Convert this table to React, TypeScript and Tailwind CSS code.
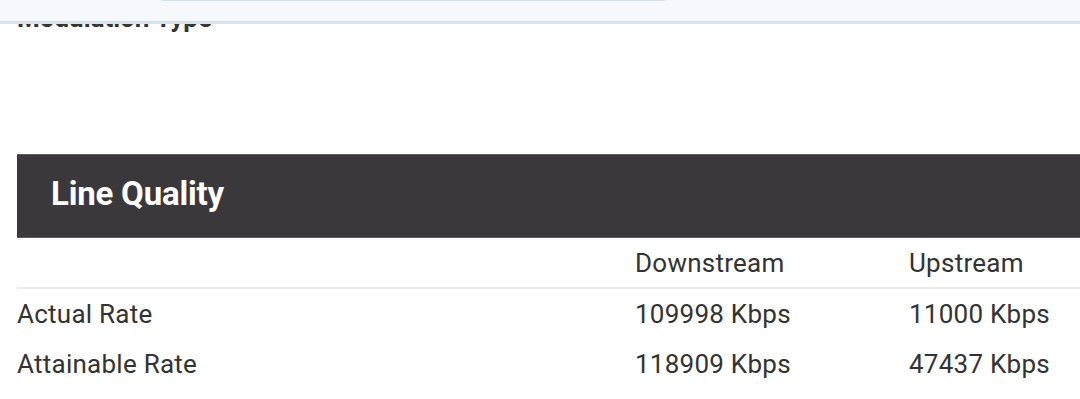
import React from 'react';

type RateRow = { label: string; down: string; up: string };

const rows: RateRow[] = [
  { label: 'Actual Rate', down: '109998 Kbps', up: '11000 Kbps' },
  { label: 'Attainable Rate', down: '118909 Kbps', up: '47437 Kbps' },
];

export default function App() {
  return (
    <div className="relative h-[399px] w-full overflow-hidden bg-white font-['Roboto',sans-serif] text-[#333333]">
      <div className="absolute inset-x-0 top-0 z-10 h-[24px] overflow-hidden border-b-[3px] border-[#d9e1ea] bg-[#f5f8fd]">
        <div className="ml-[158px] mt-[-39px] h-[40px] w-[511px] rounded-[6px] border border-[#cfe2f3] bg-[#f7faff]" />
      </div>

      <div className="pl-[17px]">
        <div className="pt-[2px] text-[26px] font-bold leading-[32px]">Modulation Type</div>

        {/* Line Quality section */}
        <section className="mt-[120px]">
          <div className="border-y border-[#5e5d60] bg-[#3a383b] pl-[34px] pt-[19px] pb-[23px]">
            <h2 className="text-[33px] font-bold leading-[40px] tracking-[-0.2px] text-white">Line Quality</h2>
          </div>

          <div className="grid grid-cols-[618px_274px_1fr] border-b-2 border-[#ececec] pt-[10px] pb-[9px] text-[26px] leading-[30px] tracking-[0.25px]">
            <div />
            <div>Downstream</div>
            <div>Upstream</div>
          </div>

          {rows.map((row) => (
            <div key={row.label} className="grid grid-cols-[618px_274px_1fr] py-[10px] text-[26px] leading-[30px] tracking-[0.25px]">
              <div>{row.label}</div>
              <div>{row.down}</div>
              <div>{row.up}</div>
            </div>
          ))}
        </section>
      </div>
    </div>
  );
}
